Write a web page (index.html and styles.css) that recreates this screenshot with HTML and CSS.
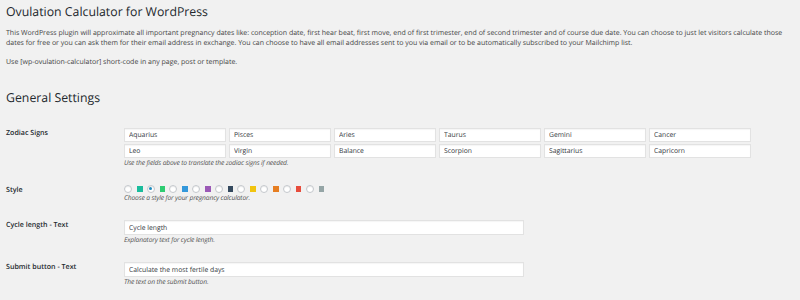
FILE: index.html
```html
<!DOCTYPE html>
<html lang="en">
<head>
<meta charset="utf-8">
<title>Ovulation Calculator for WordPress</title>
<link rel="stylesheet" href="styles.css">
</head>
<body>
<div class="wrap">
  <h1 class="title">Ovulation Calculator for WordPress</h1>
  <p class="intro">This WordPress plugin will approximate all important pregnancy dates like: conception date, first hear beat, first move, end of first trimester, end of second trimester and of course due date. You can choose to just let visitors calculate those dates for free or you can ask them for their email address in exchange. You can choose to have all email addresses sent to you via email or to be automatically subscribed to your Mailchimp list.</p>
  <p class="intro">Use [wp-ovulation-calculator] short-code in any page, post or template.</p>

  <h2 class="section">General Settings</h2>

  <div class="form">
    <div class="row">
      <div class="label">Zodiac Signs</div>
      <div class="field">
        <div class="signs">
          <input class="text" type="text" value="Aquarius">
          <input class="text" type="text" value="Pisces">
          <input class="text" type="text" value="Aries">
          <input class="text" type="text" value="Taurus">
          <input class="text" type="text" value="Gemini">
          <input class="text" type="text" value="Cancer">
          <input class="text" type="text" value="Leo">
          <input class="text" type="text" value="Virgin">
          <input class="text" type="text" value="Balance">
          <input class="text" type="text" value="Scorpion">
          <input class="text" type="text" value="Sagittarius">
          <input class="text" type="text" value="Capricorn">
        </div>
        <p class="desc">Use the fields above to translate the zodiac signs if needed.</p>
      </div>
    </div>

    <div class="row">
      <div class="label label-style">Style</div>
      <div class="field">
        <div class="styles">
          <span class="opt"><span class="radio"></span><span class="swatch c-teal"></span></span>
          <span class="opt"><span class="radio checked"></span><span class="swatch c-green"></span></span>
          <span class="opt"><span class="radio"></span><span class="swatch c-blue"></span></span>
          <span class="opt"><span class="radio"></span><span class="swatch c-purple"></span></span>
          <span class="opt"><span class="radio"></span><span class="swatch c-navy"></span></span>
          <span class="opt"><span class="radio"></span><span class="swatch c-yellow"></span></span>
          <span class="opt"><span class="radio"></span><span class="swatch c-orange"></span></span>
          <span class="opt"><span class="radio"></span><span class="swatch c-red"></span></span>
          <span class="opt"><span class="radio"></span><span class="swatch c-gray"></span></span>
        </div>
        <p class="desc">Choose a style for your pregnancy calculator.</p>
      </div>
    </div>

    <div class="row">
      <div class="label">Cycle length - Text</div>
      <div class="field">
        <input class="text wide" type="text" value="Cycle length">
        <p class="desc">Explanatory text for cycle length.</p>
      </div>
    </div>

    <div class="row">
      <div class="label">Submit button - Text</div>
      <div class="field">
        <input class="text wide" type="text" value="Calculate the most fertile days">
        <p class="desc">The text on the submit button.</p>
      </div>
    </div>
  </div>
</div>
</body>
</html>
```

FILE: styles.css
```css
html, body {
  margin: 0;
  padding: 0;
  background: #f1f1f1;
}

body {
  font-family: "Open Sans", "Noto Sans", sans-serif;
  color: #444;
  text-rendering: geometricPrecision;
}

.wrap {
  padding: 4px 8px 0 6px;
}

.title {
  margin: 0;
  font-size: 12.3px;
  line-height: 16px;
  font-weight: 400;
  color: #23282d;
}

.intro {
  margin: 9px 0 0;
  font-size: 7px;
  line-height: 10px;
  color: #444;
}

.intro + .intro {
  margin-top: 8.5px;
}

.section {
  margin: 22px 0 0;
  font-size: 12.3px;
  line-height: 16px;
  font-weight: 400;
  color: #23282d;
}

.form {
  margin-top: 22px;
  display: flex;
  flex-direction: column;
  gap: 17.3px;
}

.row {
  display: grid;
  grid-template-columns: 118px 1fr;
}

.label {
  padding-top: 1.5px;
  font-size: 7.1px;
  line-height: 9.6px;
  font-weight: 600;
  color: #23282d;
}

.label-style {
  padding-top: 1.5px;
}

.field {
  display: flex;
  flex-direction: column;
  align-items: flex-start;
}

.signs {
  display: grid;
  grid-template-columns: repeat(6, 102px);
  column-gap: 3px;
  row-gap: 1.5px;
}

.text {
  box-sizing: border-box;
  height: 14.5px;
  margin: 0;
  padding: 0 4px;
  border: 1px solid #e2e2e2;
  border-radius: 0;
  background: #fff;
  box-shadow: inset 0 1px 1px rgba(0, 0, 0, 0.04);
  font-family: "Open Sans", "Noto Sans", sans-serif;
  font-size: 6.8px;
  color: #32373c;
  outline: none;
  text-rendering: geometricPrecision;
}

.wide {
  width: 400px;
  height: 15px;
}

.desc {
  margin: 0;
  font-size: 6.7px;
  line-height: 9.6px;
  font-style: italic;
  letter-spacing: -0.15px;
  color: #555;
}

.styles {
  display: flex;
  align-items: center;
  height: 8px;
}

.opt {
  display: flex;
  align-items: center;
  margin-right: 4.2px;
}

.radio {
  box-sizing: border-box;
  width: 8px;
  height: 8px;
  border: 1px solid #c4c8cc;
  border-radius: 50%;
  background: #fff;
  box-shadow: inset 0 1px 1px rgba(0, 0, 0, 0.08);
  display: flex;
  align-items: center;
  justify-content: center;
}

.radio.checked::before {
  content: "";
  width: 3px;
  height: 3px;
  border-radius: 50%;
  background: #1e8cbe;
}

.swatch {
  width: 5.5px;
  height: 5.5px;
  margin-left: 5px;
}

.c-teal { background: #1abc9c; }
.c-green { background: #2ecc71; }
.c-blue { background: #3498db; }
.c-purple { background: #9b59b6; }
.c-navy { background: #34495e; }
.c-yellow { background: #f1c40f; }
.c-orange { background: #e67e22; }
.c-red { background: #e74c3c; }
.c-gray { background: #95a5a6; }
```
